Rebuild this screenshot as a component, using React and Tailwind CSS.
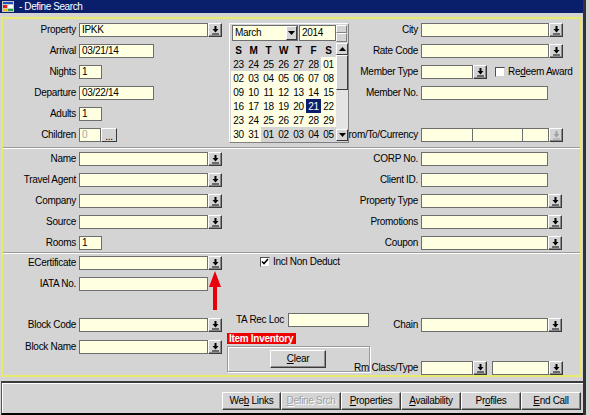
import React from "react";

const font = "font-['Liberation_Sans',Arial,sans-serif]";

function DownIcon({ color = "#000" }) {
  return (
    <svg width="7" height="9" viewBox="0 0 7 9">
      <rect x="2.5" y="0" width="2" height="3" fill={color} />
      <path d="M0.5 3h6L3.5 6.5z" fill={color} />
      <rect x="0" y="7.5" width="7" height="1" fill={color} />
    </svg>
  );
}

function Drop({ dim }) {
  return (
    <div className="flex h-[14px] w-[14px] shrink-0 items-center justify-center border border-b-[#3a3a3a] border-l-white border-r-[#3a3a3a] border-t-white bg-[#d4d4d4] shadow-[inset_-1px_-1px_0_#8a8a8a]">
      <DownIcon color={dim ? "#a0a0a0" : "#000"} />
    </div>
  );
}

function Field({ w, value, dim, className = "" }) {
  return (
    <div
      className={`${w} h-[14px] shrink-0 border border-[#6e6e6e] bg-[#ffffe1] px-[2px] text-[10px] leading-[12px] ${
        dim ? "text-[#a8a8a8]" : "text-black"
      } ${className}`}
    >
      {value}
    </div>
  );
}

function Row({ label, lw, children, className = "" }) {
  return (
    <div className={`flex h-[14px] items-center ${className}`}>
      <div className={`${lw} flex shrink-0 justify-end pr-[3px]`}>
        <span className="whitespace-nowrap leading-none">{label}</span>
      </div>
      {children}
    </div>
  );
}

function Check({ checked, className = "" }) {
  return (
    <div
      className={`flex h-[10px] w-[10px] shrink-0 items-center justify-center border border-b-[#d0d0d0] border-l-[#505050] border-r-[#d0d0d0] border-t-[#505050] bg-white ${className}`}
    >
      {checked && (
        <svg width="8" height="8" viewBox="0 0 8 8">
          <path d="M1 3.5l2 2 4-4.5" stroke="#000" strokeWidth="1.6" fill="none" />
        </svg>
      )}
    </div>
  );
}

function Sep() {
  return <div className="h-[2px] border-t border-b border-t-[#9a9a9a] border-b-white" />;
}

const weeks = [
  [["23", 1], ["24", 1], ["25", 1], ["26", 1], ["27", 1], ["28", 1], ["01", 0]],
  [["02", 0], ["03", 0], ["04", 0], ["05", 0], ["06", 0], ["07", 0], ["08", 0]],
  [["09", 0], ["10", 0], ["11", 0], ["12", 0], ["13", 0], ["14", 0], ["15", 0]],
  [["16", 0], ["17", 0], ["18", 0], ["19", 0], ["20", 0], ["21", 2], ["22", 0]],
  [["23", 0], ["24", 0], ["25", 0], ["26", 0], ["27", 0], ["28", 0], ["29", 0]],
  [["30", 0], ["31", 0], ["01", 1], ["02", 1], ["03", 1], ["04", 1], ["05", 1]],
];

function Tri({ up }) {
  return (
    <svg width="7" height="4" viewBox="0 0 7 4">
      <path d={up ? "M0 4h7L3.5 0z" : "M0 0h7L3.5 4z"} fill="#000" />
    </svg>
  );
}

function Calendar() {
  return (
    <div className="absolute left-[229px] top-[23px] h-[120px] w-[120px] border border-b-[#808080] border-l-white border-r-[#808080] border-t-white bg-[#d4d4d4]">
      <div className="flex h-[18px] items-center">
        <div className="ml-[2px] flex h-[16px] w-[66px] items-center border border-[#6e6e6e] bg-[#ffffe1]">
          <span className="flex-1 pl-[2px] leading-none">March</span>
          <div className="flex h-[14px] w-[11px] items-center justify-center border border-b-[#3a3a3a] border-l-white border-r-[#3a3a3a] border-t-white bg-[#d4d4d4]">
            <Tri />
          </div>
        </div>
        <div className="ml-[1px] h-[16px] w-[37px] border border-[#6e6e6e] bg-[#ffffe1] pl-[2px] leading-[14px]">2014</div>
        <div className="flex h-[17px] w-[11px] flex-col">
          <div className="h-[8px] border border-b-[#808080] border-l-white border-r-[#808080] border-t-white bg-[#d4d4d4]" />
          <div className="h-[9px] border border-b-[#808080] border-l-white border-r-[#808080] border-t-white bg-[#d4d4d4]" />
        </div>
      </div>
      <div className="mt-[1px] flex">
        <div className="ml-[1px] w-[105px] tracking-[-0.3px]">
          <div className="grid h-[14px] grid-cols-7 items-center bg-[#d4d4d4] text-center font-bold">
            {["S", "M", "T", "W", "T", "F", "S"].map((d, i) => (
              <span key={i}>{d}</span>
            ))}
          </div>
          {weeks.map((w, r) => (
            <div key={r} className="grid h-[14px] grid-cols-7">
              {w.map(([d, t], c) => (
                <div
                  key={c}
                  className={`flex items-center justify-center ${
                    t === 2
                      ? "bg-[#0a1f6c] text-white"
                      : t === 1
                      ? "bg-[#d4d4d4]"
                      : "bg-[#ffffe6]"
                  }`}
                >
                  {d}
                </div>
              ))}
            </div>
          ))}
        </div>
        <div className="flex h-[98px] w-[12px] flex-col bg-[#e4e4e4]">
          <div className="flex h-[12px] items-center justify-center border border-b-[#3a3a3a] border-l-white border-r-[#3a3a3a] border-t-white bg-[#d4d4d4]">
            <Tri up />
          </div>
          <div className="h-[35px] border border-b-[#3a3a3a] border-l-white border-r-[#3a3a3a] border-t-white bg-[#d4d4d4]" />
          <div className="flex-1" />
          <div className="flex h-[12px] items-center justify-center border border-b-[#3a3a3a] border-l-white border-r-[#3a3a3a] border-t-white bg-[#d4d4d4]">
            <Tri />
          </div>
        </div>
      </div>
    </div>
  );
}

function Btn({ children, dim, w = "w-[60px]" }) {
  return (
    <div
      className={`${w} flex h-[18px] items-center justify-center border border-b-[#3a3a3a] border-l-white border-r-[#3a3a3a] border-t-white bg-[#d4d4d4] shadow-[inset_-1px_-1px_0_#8a8a8a] ${
        dim ? "text-[#a0a0a0] [text-shadow:1px_1px_0_#fff]" : "text-black"
      }`}
    >
      <span className="leading-none">{children}</span>
    </div>
  );
}

export default function App() {
  const L = "w-[76px]";
  const R = "w-[91px]";
  return (
    <div className={`${font} relative flex h-[415px] w-[589px] overflow-hidden bg-[#d4d4d4] text-[10px] tracking-[-0.3px] text-black`}>
      <div className="flex w-[586px] flex-col border-r-[3px] border-[#333]">
        {/* title bar */}
        <div className="flex h-[13px] items-center bg-[#0a1f6c] pl-[2px] text-white">
          <svg width="12" height="11" viewBox="0 0 12 11">
            <rect x="0" y="0" width="12" height="11" fill="#c8c8c8" />
            <rect x="1" y="1" width="10" height="2" fill="#2050c0" />
            <rect x="1" y="4" width="4" height="3" fill="#e02020" />
            <rect x="6" y="4" width="5" height="3" fill="#ffffff" />
            <rect x="1" y="8" width="4" height="2" fill="#f0c000" />
            <rect x="6" y="8" width="5" height="2" fill="#20a040" />
          </svg>
          <span className="ml-[5px] text-[10px] leading-none tracking-[-0.4px]">- Define Search</span>
        </div>

        {/* main panel */}
        <div className="ml-[1px] mt-[4px] flex h-[360px] w-[581px] flex-col border-2 border-[#e9e96e]">
          {/* section 1 */}
          <div className="flex h-[128px] pt-[4px]">
            <div className="flex w-[327px] flex-col gap-[7px]">
              <Row lw={L} label="Property">
                <Field w="w-[129px]" value="IPKK" />
                <Drop />
              </Row>
              <Row lw={L} label="Arrival">
                <Field w="w-[75px]" value="03/21/14" />
              </Row>
              <Row lw={L} label="Nights">
                <Field w="w-[23px]" value="1" />
              </Row>
              <Row lw={L} label="Departure">
                <Field w="w-[75px]" value="03/22/14" />
              </Row>
              <Row lw={L} label="Adults">
                <Field w="w-[23px]" value="1" />
              </Row>
              <Row lw={L} label="Children">
                <Field w="w-[22px]" value="0" dim />
                <div className="flex h-[14px] w-[16px] items-end justify-center border border-b-[#3a3a3a] border-l-white border-r-[#3a3a3a] border-t-white bg-[#d4d4d4] leading-[9px]">
                  ...
                </div>
              </Row>
            </div>
            <div className="flex flex-col gap-[7px]">
              <Row lw={R} label="City">
                <Field w="w-[128px]" />
                <Drop />
              </Row>
              <Row lw={R} label="Rate Code">
                <Field w="w-[128px]" />
                <Drop />
              </Row>
              <Row lw={R} label="Member Type">
                <Field w="w-[52px]" />
                <Drop />
                <Check className="ml-[8px]" />
                <span className="ml-[3px] whitespace-nowrap leading-none">
                  Re<u>d</u>eem Award
                </span>
              </Row>
              <Row lw={R} label="Member No.">
                <Field w="w-[127px]" />
              </Row>
              <div className="h-[14px]" />
              <Row lw={R} label="From/To/Currency">
                <Field w="w-[52px]" />
                <Field w="w-[51px]" className="-ml-[1px]" />
                <Field w="w-[27px]" className="-ml-[1px]" />
                <Drop dim />
              </Row>
            </div>
          </div>
          <Sep />

          {/* section 2 */}
          <div className="flex h-[103px] pt-[3px]">
            <div className="flex w-[327px] flex-col gap-[7px]">
              {["Name", "Travel Agent", "Company", "Source"].map((l) => (
                <Row key={l} lw={L} label={l}>
                  <Field w="w-[129px]" />
                  <Drop />
                </Row>
              ))}
              <Row lw={L} label="Rooms">
                <Field w="w-[23px]" value="1" />
              </Row>
            </div>
            <div className="flex flex-col gap-[7px]">
              <Row lw={R} label="CORP No.">
                <Field w="w-[127px]" />
              </Row>
              <Row lw={R} label="Client ID.">
                <Field w="w-[127px]" />
              </Row>
              {["Property  Type", "Promotions", "Coupon"].map((l) => (
                <Row key={l} lw={R} label={l}>
                  <Field w="w-[127px]" />
                  <Drop />
                </Row>
              ))}
            </div>
          </div>
          <Sep />

          {/* section 3 */}
          <div className="flex flex-1">
            <div className="flex w-[219px] flex-col pt-[2px]">
              <Row lw={L} label="ECertificate">
                <Field w="w-[129px]" />
                <Drop />
              </Row>
              <Row lw={L} label="IATA No." className="mt-[7px]">
                <Field w="w-[129px]" />
              </Row>
              <Row lw={L} label="Block Code" className="mt-[27px]">
                <Field w="w-[129px]" />
                <Drop />
              </Row>
              <Row lw={L} label="Block Name" className="mt-[8px]">
                <Field w="w-[129px]" />
                <Drop />
              </Row>
            </div>
            <div className="flex w-[150px] flex-col pt-[3px]">
              <div className="flex h-[10px] items-center pl-[38px]">
                <Check checked />
                <span className="ml-[3px] whitespace-nowrap leading-none">Incl Non Deduct</span>
              </div>
              <div className="mt-[46px] flex h-[14px] items-center justify-end gap-[4px] pr-[3px]">
                <span className="whitespace-nowrap leading-none">TA Rec Loc</span>
                <Field w="w-[81px]" />
              </div>
              <div className="ml-[5px] mt-[6px] h-[11px] w-[69px] bg-[#ee0000] pl-[2px] text-[10px] font-bold leading-[11px] text-white">
                Item Inventory
              </div>
              <div className="ml-[5px] mt-[2px] h-[26px] w-[143px] border border-[#9a9a9a] pl-[42px] pt-[3px] shadow-[inset_1px_1px_0_#fff,1px_1px_0_#fff]">
                <Btn w="w-[56px]">
                  <u>C</u>lear
                </Btn>
              </div>
            </div>
            <div className="flex flex-col pt-[64px]">
              <Row lw="w-[49px]" label="Chain">
                <Field w="w-[127px]" />
                <Drop />
              </Row>
              <Row lw="w-[49px]" label="Rm Class/Type" className="mt-[29px]">
                <Field w="w-[52px]" />
                <Drop />
                <Field w="w-[57px]" className="ml-[5px]" />
                <Drop />
              </Row>
            </div>
          </div>
        </div>

        {/* bottom bar */}
        <div className="ml-[1px] mt-[4px] flex-1 border-b-2 border-l border-t-2 border-b-black border-l-[#555] border-t-[#3a3a3a]">
          <div className="flex h-full justify-end border-l border-t border-white pr-[2px] pt-[8px]">
            <Btn w="w-[59px]">
              We<u>b</u> Links
            </Btn>
            <Btn dim>
              <u>D</u>efine Srch
            </Btn>
            <Btn>
              <u>P</u>roperties
            </Btn>
            <Btn>
              <u>A</u>vailability
            </Btn>
            <Btn>
              Pr<u>o</u>files
            </Btn>
            <Btn>
              <u>E</u>nd Call
            </Btn>
          </div>
        </div>
      </div>

      <Calendar />

      {/* red arrow annotation */}
      <svg className="absolute left-[208px] top-[271px]" width="14" height="39" viewBox="0 0 14 39">
        <path d="M7 0L13 16H1z" fill="#e8000a" />
        <rect x="5" y="15" width="4" height="24" fill="#e8000a" />
      </svg>
    </div>
  );
}
